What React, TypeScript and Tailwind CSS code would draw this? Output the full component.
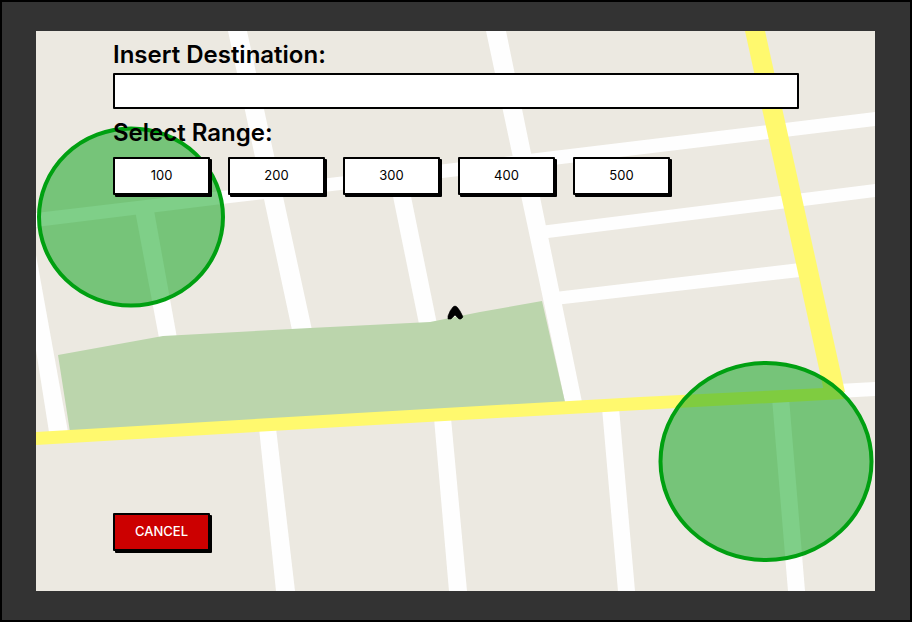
const ranges = [100, 200, 300, 400, 500];

function MapBackground() {
  return (
    <svg
      className="absolute inset-0 h-full w-full"
      viewBox="36 31 839 560"
      preserveAspectRatio="none"
      aria-hidden="true"
    >
      <rect x="36" y="31" width="839" height="560" fill="#ece9e1" />
      {/* side streets */}
      <g fill="#fefefe">
        <path d="M228 31H247L312 330H292Z" />
        <path d="M486 31H506L582 402H565Z" />
        <path d="M388 172H406L437 324H419Z" />
        <path d="M134 205H153L177 338H159Z" />
        <path d="M36 255L68 432H49L36 350Z" />
        <path d="M36 213L230 190L545 152L875 112V126L545 166L230 203L36 227Z" />
        <path d="M540 226L875 184V197L540 239Z" />
        <path d="M555 292L800 263V277L555 305Z" />
        <path d="M259 428H276L295 591H276Z" />
        <path d="M434 418H451L467 591H449Z" />
        <path d="M602 408H619L635 591H618Z" />
        <path d="M772 398H789L805 591H788Z" />
        <path d="M838 384L875 382V396L838 398Z" />
      </g>
      {/* park */}
      <path d="M58 355L163 336L310 328L430 322L480 312L542 301L565 402L70 432Z" fill="#bbd5ac" />
      {/* main roads */}
      <g fill="#fff96e">
        <path d="M36 432L340 414L640 397L844 387V399L640 410L340 427L36 445Z" />
        <path d="M745 31H765L845 392L825 396Z" />
      </g>
      {/* search areas */}
      <g fill="#00a011" fillOpacity="0.5" stroke="#00a011" strokeWidth="4">
        <ellipse cx="131" cy="217" rx="92" ry="88.5" />
        <ellipse cx="766" cy="461.5" rx="105.5" ry="98.5" />
      </g>
      {/* current position */}
      <path d="M448 316Q450 310 453 307Q455 305 457 307Q460 310 463 317L461 319H459L455 315L451 319H448Z" fill="#000" stroke="#000" strokeWidth="0.6" />
    </svg>
  );
}

const buttonBase =
  "h-[38px] w-[97px] rounded-[1px] border-2 border-black text-[13px] shadow-[2px_2px_0_0_#000]";

export default function App() {
  return (
    <div className="flex min-h-screen flex-col border-2 border-black bg-[#333333] pt-[29px] pr-[35px] pb-[29px] pl-[34px] font-['Inter',sans-serif] text-black">
      <main className="relative flex grow flex-col overflow-hidden">
        <MapBackground />
        <form
          className="relative flex grow flex-col items-start px-[76px] pt-2 pb-10 pl-[77px]"
          onSubmit={(event) => event.preventDefault()}
        >
          <label htmlFor="destination" className="pb-0.5 text-2xl leading-8 font-semibold">
            Insert Destination:
          </label>
          <input
            id="destination"
            type="text"
            className="h-9 w-full rounded-[1px] border-2 border-black bg-white px-3 text-base outline-none"
          />
          <fieldset className="mt-2">
            <legend className="text-2xl leading-8 font-semibold">Select Range:</legend>
            <div className="mt-2 flex flex-wrap gap-[18px]">
              {ranges.map((range) => (
                <button key={range} type="button" className={`${buttonBase} bg-white`}>
                  {range}
                </button>
              ))}
            </div>
          </fieldset>
          <button type="reset" className={`${buttonBase} mt-auto bg-[#cc0000] font-medium text-white`}>
            CANCEL
          </button>
        </form>
      </main>
    </div>
  );
}
